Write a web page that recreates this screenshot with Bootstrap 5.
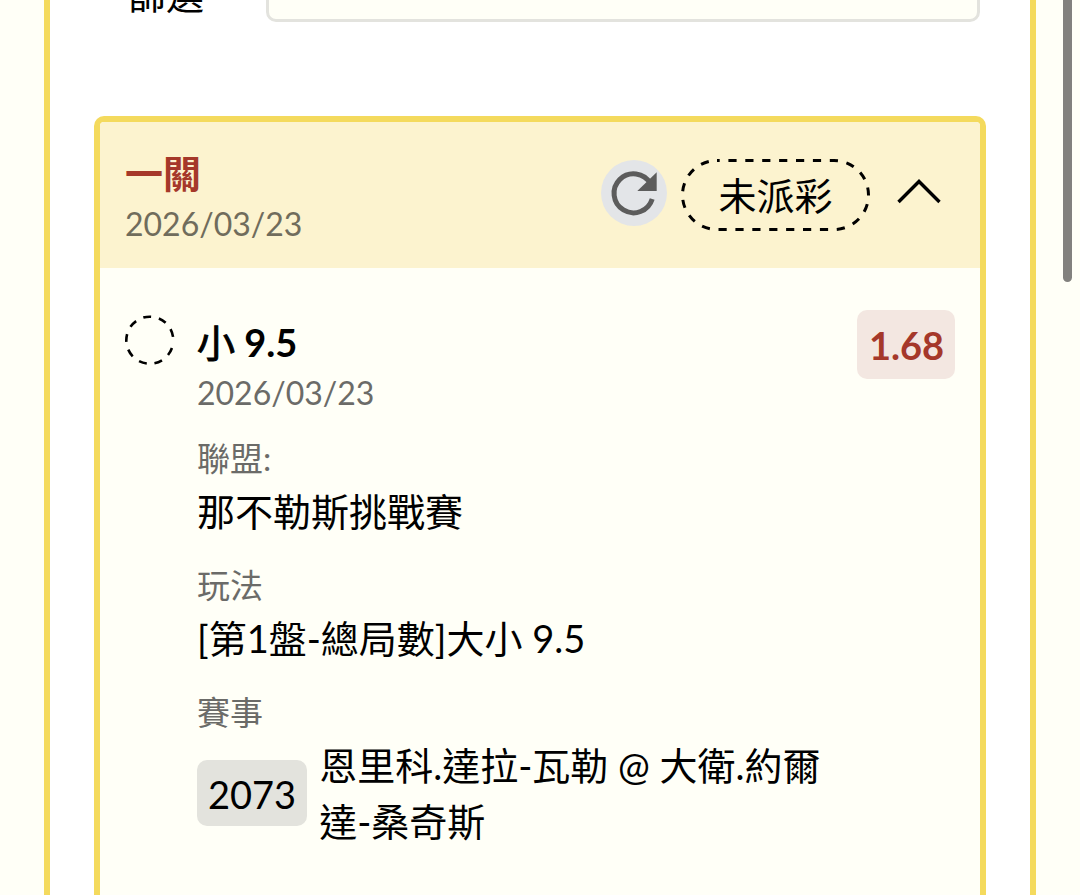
<!DOCTYPE html>
<html lang="zh-Hant">
<head>
<meta charset="utf-8">
<meta name="viewport" content="width=device-width, initial-scale=1">
<title>注單</title>
<link href="https://cdn.jsdelivr.net/npm/bootstrap@5.3.0/dist/css/bootstrap.min.css" rel="stylesheet">
<style>
  :root { --gold: #f4da5d; --cream: #fffff7; --brick: #a5382a; }
  body {
    background: var(--cream); color: #000;
    font-family: Lato, "Noto Sans CJK TC", sans-serif;
    font-size: 38px; line-height: 56px;
  }
  .bet-panel { margin: 0 44px; padding: 0 44px; background: #fff; border: solid var(--gold); border-width: 0 6px; }
  .filter-bar { height: 22px; padding: 0 6px 0 34px; margin-bottom: 94px; }
  .filter-label { width: 138px; }
  .semi { font-weight: 400; -webkit-text-stroke: 1px currentColor; }
  .filter-box { height: 80px; border: 3px solid #e3e3de; border-radius: 10px; background: var(--cream); }
  .slip { border: 6px solid var(--gold); border-bottom: 0; border-radius: 10px 10px 0 0; background: var(--cream); }
  .slip-head { background: #fcf3cf; padding: 24px 39px 20px 25px; border-radius: 4px 4px 0 0; }
  .slip-body { padding: 42px 25px 20px; }
  .slip-name { font-size: 38px; line-height: 54px; font-weight: 700; color: var(--brick); margin: 0; }
  .pick { font-size: 38px; line-height: 54px; font-weight: 700; margin: 0; }
  .slip-date { font-size: 32px; line-height: 48px; color: #6b6b68; margin: 0; }
  .slip-head .slip-date { color: #706c5c; }
  .head-tools { gap: 14px; margin-top: 13px; }
  .reload { width: 66px; height: 66px; border-radius: 50%; background: #e3e5e8; }
  .state { width: 189px; height: 72px; }
  .state rect { x: 1.5px; y: 1.5px; width: calc(100% - 3px); height: calc(100% - 3px); }
  .toggle { margin-left: 13px; }
  .ring { margin: 5px 22px 0 0; }
  .pick-info { padding: 5px 16px 0 0; }
  .detail { margin: 16px 0 0; }
  .detail dt { font-size: 33px; line-height: 50px; font-weight: 400; color: #6b6b68; }
  .detail dd { margin-bottom: 21px; }
  .odds { min-width: 98px; height: 69px; line-height: 71px; padding: 0 12px; border-radius: 10px; background: #f3e7e1; color: var(--brick); font-weight: 700; }
  .match-no { height: 66px; line-height: 68px; padding: 0 11px; border-radius: 10px; background: #e3e3dd; }
  .scroll-thumb { top: 0; right: 8px; width: 9px; height: 282px; border-radius: 0 0 5px 5px; background: #82817e; }
</style>
</head>
<body class="position-relative">
<main class="bet-panel min-vh-100 d-flex flex-column">
  <div class="filter-bar d-flex align-items-end">
    <label class="filter-label" for="filter">篩選</label>
    <input class="filter-box flex-grow-1" id="filter" type="text">
  </div>

  <article class="slip flex-grow-1">
    <header class="slip-head d-flex justify-content-between align-items-start">
      <div>
        <h2 class="slip-name">一關</h2>
        <p class="slip-date">2026/03/23</p>
      </div>
      <div class="head-tools d-flex align-items-center">
        <button class="reload btn p-0 mb-1 border-0 d-flex" type="button" aria-label="重新整理">
          <svg width="66" height="66" viewBox="0 0 66 66" fill="none">
            <path d="M49.4 23.5A19.5 19.5 0 1 0 51.2 39" stroke="#5c5c5c" stroke-width="5"/>
            <path d="M55.7 12.3V31H36.3z" fill="#5c5c5c"/>
          </svg>
        </button>
        <span class="state position-relative d-flex justify-content-center align-items-center">
          <svg class="position-absolute top-0 start-0 w-100 h-100" fill="none" stroke="#000" stroke-width="3" stroke-dasharray="8.2 8.7" stroke-dashoffset="5.5"><rect rx="34.5"/></svg>
          未派彩
        </span>
        <button class="toggle btn p-0 border-0 d-flex" type="button" aria-label="收合">
          <svg width="44" height="44" viewBox="0 0 44 44" fill="none"><path d="M1.5 29 22 8.5 42.5 29" stroke="#000" stroke-width="3.4"/></svg>
        </button>
      </div>
    </header>

    <div class="slip-body d-flex align-items-start">
      <svg class="ring flex-shrink-0" width="50" height="50" viewBox="0 0 50 50" fill="none">
        <circle cx="24.8" cy="25.2" r="23.5" stroke="#000" stroke-width="2.6" stroke-dasharray="8 7.9" stroke-dashoffset="-8"/>
      </svg>
      <div class="pick-info flex-grow-1">
        <h3 class="pick"><span class="semi">小</span> 9.5</h3>
        <p class="slip-date">2026/03/23</p>
        <dl class="detail">
          <dt>聯盟:</dt>
          <dd>那不勒斯挑戰賽</dd>
          <dt>玩法</dt>
          <dd>[第1盤-總局數]大小 9.5</dd>
          <dt>賽事</dt>
          <dd class="d-flex align-items-center">
            <span class="match-no me-2">2073</span>
            <span class="ms-1">恩里科.達拉-瓦勒 @ 大衛.約爾達-桑奇斯</span>
          </dd>
        </dl>
      </div>
      <span class="odds text-center">1.68</span>
    </div>
  </article>
</main>
<div class="scroll-thumb position-absolute"></div>
<script src="https://cdn.jsdelivr.net/npm/bootstrap@5.3.0/dist/js/bootstrap.bundle.min.js"></script>
</body>
</html>
